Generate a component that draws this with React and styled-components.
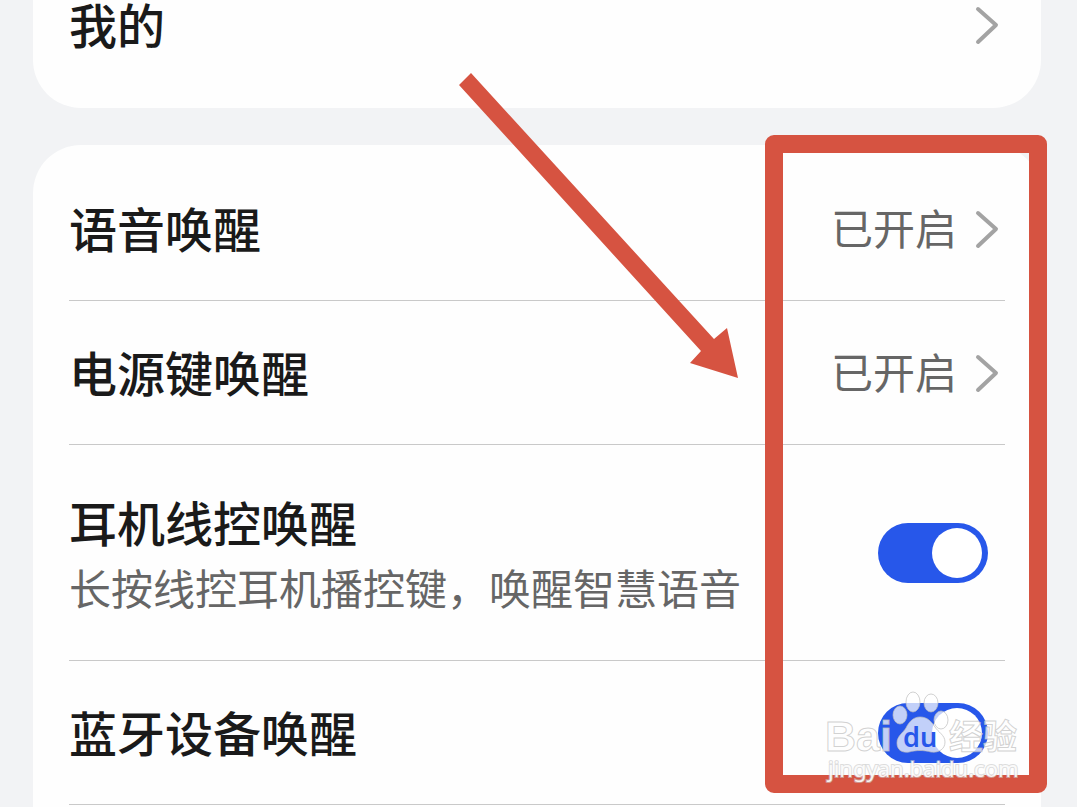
import React from 'react'
import styled, { createGlobalStyle, css } from 'styled-components'

const colors = {
  page: '#f2f3f5',
  card: '#fefefe',
  title: '#1a1a1a',
  muted: '#666666',
  chevron: '#a3a3a3',
  line: '#c9c9c9',
  blue: '#2757ea',
  red: '#d65341',
}

const GlobalStyle = createGlobalStyle`
  body {
    margin: 0;
    background-color: ${colors.page};
    font-family: 'Noto Sans CJK SC', 'Noto Sans', sans-serif;
  }
`

const Page = styled.main`
  position: relative;
  display: flex;
  flex-direction: column;
  box-sizing: border-box;
  height: 100vh;
  padding: 0 36px 0 33px;
  gap: 37px;
  overflow: hidden;
`

const Card = styled.section`
  flex: none;
  padding: 0 36px;
  background-color: ${colors.card};

  ${props =>
    props.$end
      ? css`
          padding-bottom: 58px;
          border-radius: 0 0 48px 48px;
        `
      : css`
          flex: 1 0 auto;
          padding-top: 12px;
          border-radius: 48px 48px 0 0;
        `};
`

const rowLayout = css`
  display: flex;
  align-items: center;
  box-sizing: border-box;
  width: 100%;
  min-height: ${props => props.$height}px;
  border-bottom: ${props => (props.$divided ? `1px solid ${colors.line}` : 'none')};
`

const LinkRow = styled.a`
  ${rowLayout};
  gap: 18px;
  padding-right: 6px;
  color: inherit;
  text-decoration: none;
`

const SwitchRow = styled.label`
  ${rowLayout};
  gap: 24px;
  padding-right: 17px;
`

const Texts = styled.span`
  display: flex;
  flex: 1;
  flex-direction: column;
  padding-bottom: 4px;
`

const Title = styled.span`
  color: ${colors.title};
  font-size: 48px;
  font-weight: 500;
  line-height: ${props => (props.$compact ? 46 : 72)}px;
`

const Summary = styled.span`
  color: ${colors.muted};
  font-size: 42px;
  line-height: 60px;
  white-space: nowrap;
`

const Value = styled(Summary)`
  padding-bottom: 4px;
`

const ChevronIcon = styled.svg`
  flex: none;
  width: 24px;
  height: 40px;
  fill: none;
  stroke: ${colors.chevron};
  stroke-width: 4;
  stroke-linecap: round;
  stroke-linejoin: round;
`

const Toggle = styled.input`
  display: flex;
  flex: none;
  align-items: center;
  box-sizing: border-box;
  width: 110px;
  height: 60px;
  margin: 0;
  padding: 0 6px;
  border-radius: 30px;
  background-color: #d0d2d6;
  appearance: none;

  &::before {
    width: 50px;
    height: 50px;
    border-radius: 50%;
    background-color: #fff;
    content: '';
  }

  &:checked {
    justify-content: flex-end;
    background-color: ${colors.blue};
  }
`

const Highlight = styled.div`
  position: absolute;
  top: 135px;
  right: 30px;
  box-sizing: border-box;
  width: 282px;
  height: 658px;
  border: 18px solid ${colors.red};
  border-radius: 9px;
  pointer-events: none;
`

const Arrow = styled.svg`
  position: absolute;
  top: 70px;
  right: 337px;
  width: 284px;
  height: 310px;
  fill: ${colors.red};
  pointer-events: none;
`

const Watermark = styled.svg`
  position: absolute;
  top: 686px;
  right: 53px;
  width: 204px;
  height: 100px;
  fill: rgba(255, 255, 255, 0.72);
  stroke: rgba(190, 190, 190, 0.7);
  stroke-width: 1;
  pointer-events: none;
`

const Brand = styled.text`
  font-family: 'Liberation Sans', sans-serif;
  font-size: 43px;
  font-weight: 700;
`

const BrandCn = styled.text`
  font-family: 'Noto Sans CJK SC', sans-serif;
  font-size: 34px;
  font-weight: 700;
`

const Du = styled.text`
  fill: ${colors.blue};
  stroke: none;
  font-family: 'Noto Sans', sans-serif;
  font-size: 27px;
  font-weight: 600;
`

const Site = styled.text`
  fill: rgba(255, 255, 255, 0.9);
  stroke: rgba(200, 200, 200, 0.6);
  stroke-width: 2;
  paint-order: stroke;
  font-family: 'Noto Sans', sans-serif;
  font-size: 22px;
`

const Chevron = () => (
  <ChevronIcon viewBox="0 0 24 40" aria-hidden="true">
    <path d="M3 4 L21 20 L3 37" />
  </ChevronIcon>
)

const NavItem = ({ title, value, compact, height, divided }) => (
  <LinkRow href="#" $height={height} $divided={divided}>
    <Texts>
      <Title $compact={compact}>{title}</Title>
    </Texts>
    {value && <Value>{value}</Value>}
    <Chevron />
  </LinkRow>
)

const SwitchItem = ({ title, summary, height }) => (
  <SwitchRow $height={height} $divided>
    <Texts>
      <Title>{title}</Title>
      {summary && <Summary>{summary}</Summary>}
    </Texts>
    <Toggle type="checkbox" role="switch" defaultChecked />
  </SwitchRow>
)

const App = () => (
  <>
    <GlobalStyle />
    <Page>
      <Card $end>
        <NavItem title="我的" compact height={50} />
      </Card>
      <Card>
        <NavItem title="语音唤醒" value="已开启" height={144} divided />
        <NavItem title="电源键唤醒" value="已开启" height={144} divided />
        <SwitchItem
          title="耳机线控唤醒"
          summary="长按线控耳机播控键，唤醒智慧语音"
          height={216}
        />
        <SwitchItem title="蓝牙设备唤醒" height={144} />
      </Card>

      <Arrow viewBox="456 70 284 310" aria-hidden="true">
        <path d="M471 73 L459 85 L701 351 L690 363 L738 378 L727 328 L714 339 Z" />
      </Arrow>
      <Highlight />
      <Watermark viewBox="820 686 204 100">
        <Brand x="825" y="751">Bai</Brand>
        <ellipse cx="900" cy="715" rx="7" ry="9" />
        <ellipse cx="913" cy="702" rx="7" ry="10" />
        <ellipse cx="931" cy="703" rx="7" ry="9" />
        <ellipse cx="941" cy="720" rx="7" ry="9" />
        <path d="M920 717 C913 717 909 722 906 728 C903 733 897 736 897 743 C897 750 902 753 909 752 C916 750 924 750 931 752 C939 753 945 749 945 742 C945 735 938 732 935 727 C931 721 927 717 920 717 Z" />
        <Du x="903" y="747">du</Du>
        <BrandCn x="949" y="749">经验</BrandCn>
        <Site x="828" y="777">jingyan.baidu.com</Site>
      </Watermark>
    </Page>
  </>
)

export default App
